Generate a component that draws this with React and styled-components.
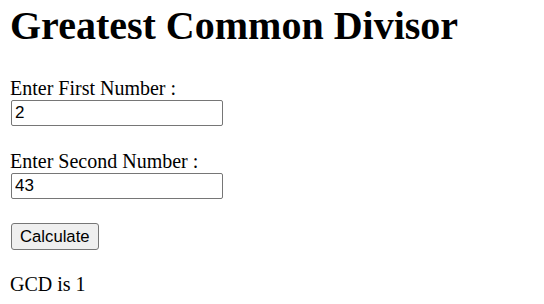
import React, { useState } from "react";
import styled, { createGlobalStyle } from "styled-components";

const GlobalStyle = createGlobalStyle`
  html, body {
    margin: 0;
    padding: 0;
    background: #fff;
  }
  body {
    font-family: "Liberation Serif", "Times New Roman", serif;
    color: #000;
  }
`;

const Page = styled.div`
  display: flex;
  flex-direction: column;
  align-items: flex-start;
  padding: 3px 10px 0 10px;
`;

const Title = styled.h1`
  margin: 0 0 27px 0;
  font-size: 40px;
  line-height: 46px;
  font-weight: bold;
`;

const Form = styled.form`
  display: flex;
  flex-direction: column;
  align-items: flex-start;
`;

const Field = styled.div`
  display: flex;
  flex-direction: column;
  align-items: flex-start;
  margin-bottom: ${({ last }) => (last ? "24px" : "23px")};
`;

const Label = styled.label`
  font-size: 20px;
  line-height: 24px;
`;

const NumberInput = styled.input`
  box-sizing: border-box;
  width: 212px;
  height: 26px;
  margin: 0 0 0 1px;
  padding: 1px 3px;
  border: 1px solid #767676;
  border-radius: 2px;
  font-family: "Liberation Sans", Arial, sans-serif;
  font-size: 17px;
  color: #000;
  background: #fff;
  outline: none;
`;

const Button = styled.button`
  box-sizing: border-box;
  height: 27px;
  margin-left: 1px;
  padding: 1px 8px;
  border: 1px solid #767676;
  border-radius: 3px;
  background: #efefef;
  font-family: "Liberation Sans", Arial, sans-serif;
  font-size: 16.7px;
  color: #000;
  cursor: pointer;
`;

const Result = styled.p`
  margin: 23px 0 0 0;
  font-size: 20px;
  line-height: 23px;
`;

function gcd(a, b) {
  a = Math.abs(a);
  b = Math.abs(b);
  while (b) {
    const t = b;
    b = a % b;
    a = t;
  }
  return a;
}

export default function App() {
  const [first, setFirst] = useState("2");
  const [second, setSecond] = useState("43");
  const [result, setResult] = useState(1);

  const handleSubmit = (e) => {
    e.preventDefault();
    setResult(gcd(parseInt(first, 10) || 0, parseInt(second, 10) || 0));
  };

  return (
    <>
      <GlobalStyle />
      <Page>
        <Title>Greatest Common Divisor</Title>
        <Form onSubmit={handleSubmit}>
          <Field>
            <Label htmlFor="first">Enter First Number :</Label>
            <NumberInput
              id="first"
              type="text"
              value={first}
              onChange={(e) => setFirst(e.target.value)}
            />
          </Field>
          <Field last>
            <Label htmlFor="second">Enter Second Number :</Label>
            <NumberInput
              id="second"
              type="text"
              value={second}
              onChange={(e) => setSecond(e.target.value)}
            />
          </Field>
          <Button type="submit">Calculate</Button>
        </Form>
        <Result>GCD is {result}</Result>
      </Page>
    </>
  );
}
